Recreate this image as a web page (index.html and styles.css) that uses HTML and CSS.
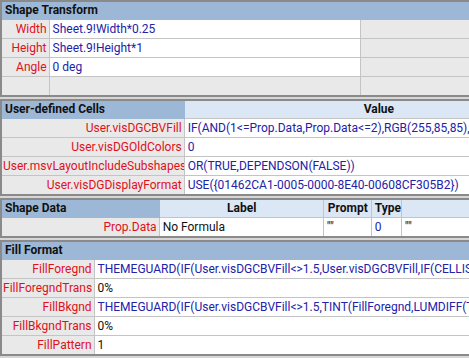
FILE: index.html
```html
<!DOCTYPE html>
<html>
<head>
<meta charset="utf-8">
<title>ShapeSheet</title>
<link rel="stylesheet" href="styles.css">
</head>
<body>
<div class="sheet">

<table class="sect w1">
  <colgroup><col class="c48"><col class="c311"><col class="c200"></colgroup>
  <tr class="hdr"><td colspan="3" class="title">Shape Transform</td></tr>
  <tr><td class="lbl">Width</td><td class="val">Sheet.9!Width*0.25</td><td class="lbl rlbl">PinX</td></tr>
  <tr><td class="lbl">Height</td><td class="val">Sheet.9!Height*1</td><td class="lbl rlbl">PinY</td></tr>
  <tr><td class="lbl">Angle</td><td class="val">0 deg</td><td class="lbl rlbl">LocPinX</td></tr>
  <tr><td class="lbl"></td><td class="lbl"></td><td class="lbl rlbl">LocPinY</td></tr>
</table>

<table class="sect w2">
  <colgroup><col class="c183"><col class="c388"></colgroup>
  <tr class="hdr"><td class="title">User-defined Cells</td><td class="colhead">Value</td></tr>
  <tr><td class="lbl">User.visDGCBVFill</td><td class="val">IF(AND(1&lt;=Prop.Data,Prop.Data&lt;=2),RGB(255,85,85),IF(Prop.Data=3,RGB(255,255,0),RGB(0,176,80)))</td></tr>
  <tr><td class="lbl">User.visDGOldColors</td><td class="val">0</td></tr>
  <tr><td class="lbl">User.msvLayoutIncludeSubshapes</td><td class="val">OR(TRUE,DEPENDSON(FALSE))</td></tr>
  <tr><td class="lbl">User.visDGDisplayFormat</td><td class="val">USE({01462CA1-0005-0000-8E40-00608CF305B2})</td></tr>
</table>

<table class="sect w3">
  <colgroup><col class="c158"><col class="c164"><col class="c48"><col class="c30"><col class="c200"></colgroup>
  <tr class="hdr"><td class="title">Shape Data</td><td class="colhead">Label</td><td class="colhead">Prompt</td><td class="colhead">Type</td><td class="colhead"></td></tr>
  <tr><td class="lbl">Prop.Data</td><td class="val plain">No Formula</td><td class="val plain">""</td><td class="val">0</td><td class="val plain">""</td></tr>
</table>

<table class="sect w4">
  <colgroup><col class="c93"><col class="c607"></colgroup>
  <tr class="hdr"><td colspan="2" class="title">Fill Format</td></tr>
  <tr><td class="lbl">FillForegnd</td><td class="val">THEMEGUARD(IF(User.visDGCBVFill&lt;&gt;1.5,User.visDGCBVFill,IF(CELLISTHEMED(TRUE),THEMEVAL("FillColor"),RGB(255,255,255))))</td></tr>
  <tr><td class="lbl">FillForegndTrans</td><td class="val plain">0%</td></tr>
  <tr><td class="lbl">FillBkgnd</td><td class="val">THEMEGUARD(IF(User.visDGCBVFill&lt;&gt;1.5,TINT(FillForegnd,LUMDIFF(THEMEVAL("FillColor"),THEMEVAL("FillColor2"))),THEMEVAL("FillColor2")))</td></tr>
  <tr><td class="lbl">FillBkgndTrans</td><td class="val plain">0%</td></tr>
  <tr><td class="lbl">FillPattern</td><td class="val plain">1</td></tr>
</table>

</div>
</body>
</html>
```

FILE: styles.css
```css
body {
  margin: 0;
  background-color: #d6d6d6;
  overflow: hidden;
  font-family: Roboto, "Liberation Sans", Arial, sans-serif;
  font-size: 12px;
}

.sheet {
  width: 469px;
  height: 358px;
  overflow: hidden;
  display: flex;
  flex-direction: column;
  gap: 2px;
}

.sect {
  border-collapse: collapse;
  table-layout: fixed;
  flex: none;
  border-top: 2px solid #8a8a8a;
  border-left: 2px solid #8a8a8a;
  border-bottom: 2px solid #8a8a8a;
  background-color: white;
}

.w1 { width: 561px; }
.w2 { width: 573px; }
.w3 { width: 602px; }
.w4 { width: 702px; }

.c30 { width: 30px; }
.c48 { width: 48px; }
.c93 { width: 93px; }
.c158 { width: 158px; }
.c164 { width: 164px; }
.c183 { width: 183px; }
.c200 { width: 200px; }
.c311 { width: 311px; }
.c388 { width: 388px; }
.c607 { width: 607px; }

td {
  height: 18px;
  padding: 0 2px 0 3px;
  border: 1px solid #c4c4c4;
  white-space: nowrap;
  overflow: hidden;
  line-height: 18px;
}

.sect tr:last-child td {
  border-bottom: none;
}

.hdr td {
  height: 17px;
  line-height: 17px;
  font-weight: bold;
  font-size: 12px;
  color: #111;
  border-top: none;
}

.title {
  background-color: #9db8d6;
  border-color: #9db8d6;
  text-align: left;
}

.colhead {
  background-color: #dce7f5;
  text-align: center;
  border-color: #c4c4c4;
}

.lbl {
  padding: 0 2px 0 1px;
  background-color: #e9e9e9;
  color: #e0101c;
  text-align: right;
  border-left: none;
}

.rlbl {
  border-left: 1px solid #c4c4c4;
}

.val {
  background-color: white;
  color: #2222a8;
  text-align: left;
}

.plain {
  color: #111;
}
```
